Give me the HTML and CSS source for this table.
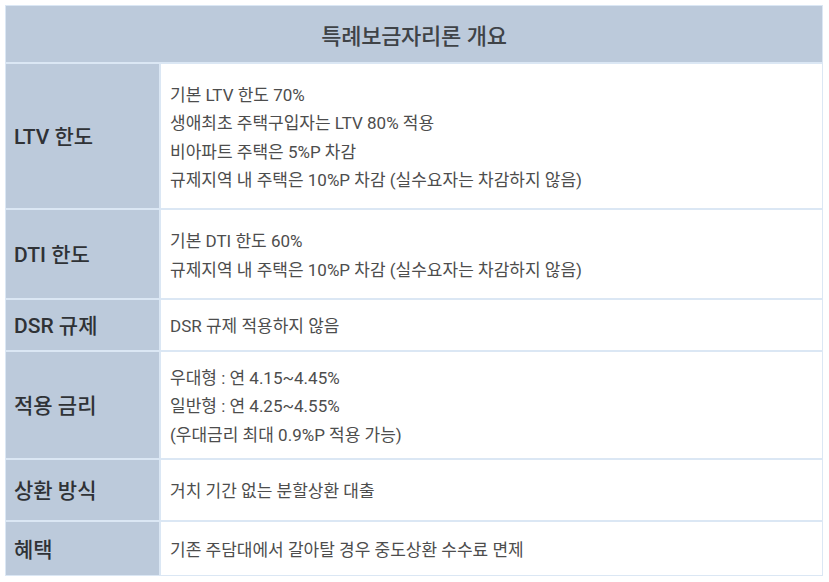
FILE: index.html
```html
<!DOCTYPE html>
<html lang="ko">
<head>
<meta charset="utf-8">
<link rel="stylesheet" href="styles.css">
</head>
<body>
<div class="table">
  <div class="title">특례보금자리론 개요</div>
  <div class="row r-ltv">
    <div class="label">LTV 한도</div>
    <div class="content">
      <p>기본 LTV 한도 70%</p>
      <p>생애최초 주택구입자는 LTV 80% 적용</p>
      <p>비아파트 주택은 5%P 차감</p>
      <p>규제지역 내 주택은 10%P 차감 (실수요자는 차감하지 않음)</p>
    </div>
  </div>
  <div class="row r-dti">
    <div class="label">DTI 한도</div>
    <div class="content">
      <p>기본 DTI 한도 60%</p>
      <p>규제지역 내 주택은 10%P 차감 (실수요자는 차감하지 않음)</p>
    </div>
  </div>
  <div class="row r-dsr">
    <div class="label">DSR 규제</div>
    <div class="content">
      <p>DSR 규제 적용하지 않음</p>
    </div>
  </div>
  <div class="row r-rate">
    <div class="label">적용 금리</div>
    <div class="content">
      <p>우대형 : 연 4.15~4.45%</p>
      <p>일반형 : 연 4.25~4.55%</p>
      <p>(우대금리 최대 0.9%P 적용 가능)</p>
    </div>
  </div>
  <div class="row r-repay">
    <div class="label">상환 방식</div>
    <div class="content">
      <p>거치 기간 없는 분할상환 대출</p>
    </div>
  </div>
  <div class="row r-benefit">
    <div class="label">혜택</div>
    <div class="content">
      <p>기존 주담대에서 갈아탈 경우 중도상환 수수료 면제</p>
    </div>
  </div>
</div>
</body>
</html>
```

FILE: styles.css
```css
* { box-sizing: border-box; }
html, body { margin: 0; padding: 0; background: #ffffff; }
body {
  padding: 5px 6px 0 5px;
  font-family: "Roboto", "Noto Sans CJK KR", sans-serif;
}
.table {
  width: 818px;
  border: 1px solid #dbe7f4;
  background: #dbe7f4;
  display: flex;
  flex-direction: column;
  gap: 2px;
}
.title {
  height: 56px;
  background: #bccadb;
  color: #3f4347;
  font-family: "Noto Sans CJK KR", sans-serif;
  font-weight: 500;
  font-size: 22px;
  display: flex;
  align-items: center;
  justify-content: center;
  letter-spacing: -0.3px;
}
.row {
  display: grid;
  grid-template-columns: 153px 1fr;
  gap: 2px;
}
.label {
  background: #bccadb;
  color: #2f3236;
  font-size: 21px;
  font-weight: 500;
  display: flex;
  align-items: center;
  padding-left: 8px;
  padding-bottom: 2px;
}
.content {
  background: #ffffff;
  color: #4d4d4d;
  font-size: 17px;
  display: flex;
  flex-direction: column;
  justify-content: center;
  padding: 3px 0 0 9px;
}
.content p {
  margin: 0;
  line-height: 28.5px;
}
.r-ltv { height: 144px; }
.r-dti { height: 88px; }
.r-dsr { height: 50px; }
.r-rate { height: 106px; }
.r-repay { height: 60px; }
.r-benefit { height: 53px; }
```
